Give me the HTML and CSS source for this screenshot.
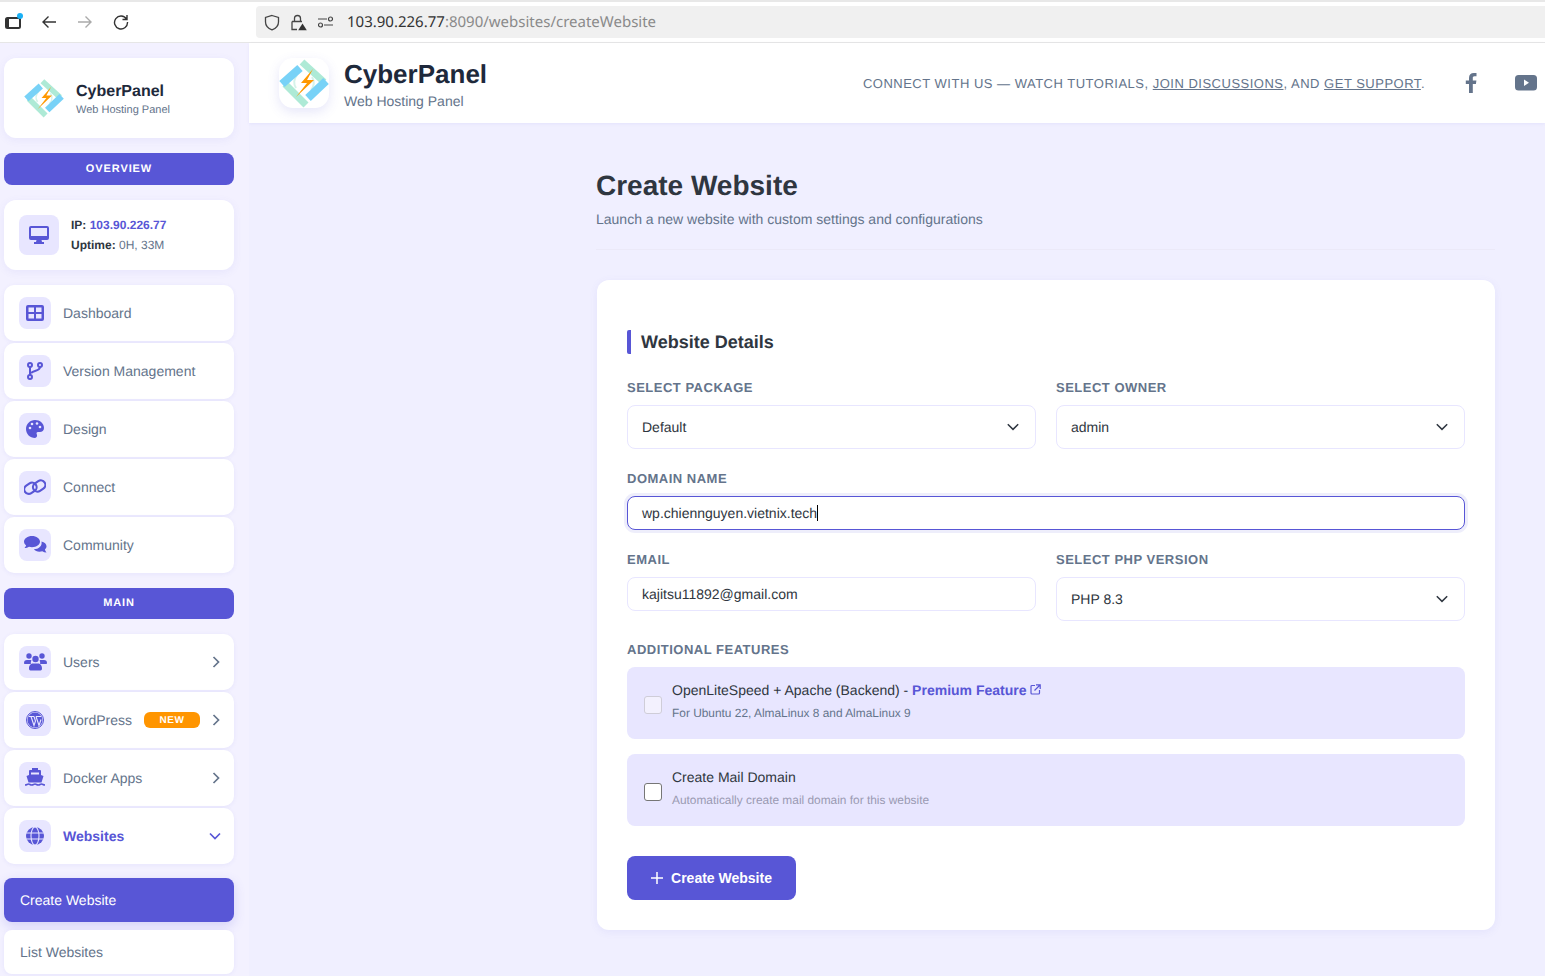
FILE: index.html
```html
<!DOCTYPE html>
<html lang="en">
<head>
    <meta charset="UTF-8">
    <title>Create Website - CyberPanel</title>
    <link rel="stylesheet" href="styles.css">
</head>
<body>
    <svg class="defs" width="0" height="0">
        <symbol id="logo" viewBox="0 0 50 50">
            <g fill="none" stroke="#aeead6" stroke-width="7">
                <path d="M23 4 45 24"/>
                <path d="M6 26 27 47"/>
            </g>
            <path d="M17 30a10.500 10.500 0 0 1 1 -13M33 19a10.500 10.500 0 0 1 -1 13" fill="none" stroke="#d5f3ea" stroke-width="2"/>
            <g fill="none" stroke="#78d2f7" stroke-width="8">
                <path d="M3 26 21 10"/>
                <path d="M47 23 29 40"/>
            </g>
            <path d="M34 11 22 25h6L17 39 35 22h-7Z" fill="#ff9800"/>
        </symbol>
    </svg>

    <header class="browser-bar">
        <div class="browser-nav">
            <span class="tab-icon"><svg width="16" height="13" viewBox="0 0 16 13"><rect x="1" y="2" width="14" height="10" rx="1.500" fill="none" stroke="#333" stroke-width="2"/><path d="M1 3h3v8H1z" fill="#333"/></svg><i class="tab-dot"></i></span>
            <svg class="nav-icon" width="16" height="16" viewBox="0 0 16 16"><path d="M15 8H2M7.500 2.500 2 8l5.500 5.500" fill="none" stroke="#333" stroke-width="1.400"/></svg>
            <svg class="nav-icon" width="16" height="16" viewBox="0 0 16 16"><path d="M1 8h13M8.500 2.500 14 8l-5.500 5.500" fill="none" stroke="#aaa" stroke-width="1.400"/></svg>
            <svg class="nav-icon" width="16" height="16" viewBox="0 0 16 16"><path d="M13.500 5A6.500 6.500 0 1 0 14.500 8M14 1v4.500H9.500" fill="none" stroke="#333" stroke-width="1.400"/></svg>
        </div>
        <div class="url-bar">
            <svg width="16" height="17" viewBox="0 0 16 17"><path d="M8 1.500 14.500 3.500V8c0 4-3 6.500-6.500 7.800C4.500 14.500 1.500 12 1.500 8V3.500Z" fill="none" stroke="#444" stroke-width="1.300"/></svg>
            <svg width="16" height="17" viewBox="0 0 16 17"><path d="M3.500 7V4.500a3 3 0 0 1 6 0V7M1 7.500h10M1 7.500v8h5" fill="none" stroke="#444" stroke-width="1.300"/><path d="M11.500 9.500l4.300 6.800H7.200Z" fill="#333"/></svg>
            <svg width="16" height="12" viewBox="0 0 16 12"><path d="M0 3h9M6 9h9" stroke="#444" stroke-width="1.200"/><circle cx="12.500" cy="3" r="2" fill="none" stroke="#444" stroke-width="1.200"/><circle cx="2.500" cy="9" r="2" fill="none" stroke="#444" stroke-width="1.200"/></svg>
            <span class="url-text">103.90.226.77<span class="url-dim">:8090/websites/createWebsite</span></span>
        </div>
    </header>

    <div class="layout">
        <aside class="sidebar">
            <div class="card brand-card">
                <svg width="40" height="40"><use href="#logo"/></svg>
                <div class="brand-text">
                    <div class="brand-name">CyberPanel</div>
                    <div class="brand-sub">Web Hosting Panel</div>
                </div>
            </div>

            <div class="section-pill">OVERVIEW</div>

            <div class="card info-card">
                <span class="info-icon">
                    <svg width="20" height="18" viewBox="0 0 20 18"><path d="M2 0h16a2 2 0 0 1 2 2v10a2 2 0 0 1-2 2h-5.500l.5 2h2v2H5v-2h2l.5-2H2a2 2 0 0 1-2-2V2a2 2 0 0 1 2-2Zm0 2v8h16V2Z" fill="#5856d6" fill-rule="evenodd"/></svg>
                </span>
                <div class="info-text">
                    <div><b>IP:</b> <b class="accent">103.90.226.77</b></div>
                    <div><b>Uptime:</b> <span class="muted">0H, 33M</span></div>
                </div>
            </div>

            <nav class="nav-group">
                <a class="nav-item"><span class="nav-icon-box"><svg width="18" height="16" viewBox="0 0 18 16"><path d="M2 0h14a2 2 0 0 1 2 2v12a2 2 0 0 1-2 2H2a2 2 0 0 1-2-2V2a2 2 0 0 1 2-2Zm.5 2.500V7H8V2.500Zm7.500 0V7h5.500V2.500ZM2.500 9v4.500H8V9ZM10 9v4.500h5.500V9Z" fill="#5856d6" fill-rule="evenodd"/></svg></span>Dashboard</a>
                <a class="nav-item"><span class="nav-icon-box"><svg width="16" height="18" viewBox="0 0 16 18"><g fill="none" stroke="#5856d6" stroke-width="2"><circle cx="3" cy="3" r="2"/><circle cx="13" cy="3" r="2"/><circle cx="3" cy="15" r="2"/><path d="M3 5v8M13 5c0 4-6 3-9 6"/></g></svg></span>Version Management</a>
                <a class="nav-item"><span class="nav-icon-box"><svg width="18" height="18" viewBox="0 0 18 18"><path d="M9 0c5 0 9 3.500 9 8 0 2.500-2 4-4 4h-2c-1.500 0-1.800 1.200-1.200 2.300.8 1.700-.2 3.700-1.800 3.700-5 0-9-4-9-9s4-9 9-9Z" fill="#5856d6"/><g fill="#e8e6ff"><circle cx="4" cy="8" r="1.300"/><circle cx="6" cy="4" r="1.300"/><circle cx="11" cy="3.500" r="1.300"/><circle cx="14" cy="7" r="1.300"/></g></svg></span>Design</a>
                <a class="nav-item"><span class="nav-icon-box"><svg width="22" height="18" viewBox="0 0 22 18"><g fill="none" stroke="#5856d6" stroke-width="2.100" transform="rotate(-34 11 9)"><rect x="0" y="3" width="13" height="9" rx="4.500"/><rect x="8.500" y="6" width="13" height="9" rx="4.500"/></g></svg></span>Connect</a>
                <a class="nav-item"><span class="nav-icon-box"><svg width="23" height="18" viewBox="0 0 23 18"><path d="M8 0c4.400 0 8 2.500 8 5.600s-3.600 5.600-8 5.600c-1 0-2-.1-3-.4-1.200.8-2.700 1.200-4.500 1.200.8-.8 1.300-1.600 1.600-2.500C.8 8.500 0 7.100 0 5.600 0 2.500 3.600 0 8 0Z" fill="#5856d6"/><path d="M17.500 5.500c3 .5 5 2.500 5 4.800 0 1.300-.6 2.400-1.600 3.300.2.900.8 2 1.600 2.900-1.600 0-3-.4-4.200-1.200-.9.300-1.700.4-2.800.4-2.400 0-4.500-1-5.600-2.500 4.700 0 8.500-3 7.600-7.700Z" fill="#5856d6"/></svg></span>Community</a>
            </nav>

            <div class="section-pill">MAIN</div>

            <nav class="nav-group">
                <a class="nav-item"><span class="nav-icon-box"><svg width="23" height="18" viewBox="0 0 23 18"><g fill="#5856d6"><circle cx="5" cy="3" r="2.700"/><circle cx="18" cy="3" r="2.700"/><circle cx="11.500" cy="6" r="3.200"/><path d="M0 10c0-2 1-3 3-3h3c.6 0 1 .1 1.500.4-.7 1-.8 1.700-.6 3.600H1c-.6 0-1-.4-1-1ZM23 10c0-2-1-3-3-3h-3c-.6 0-1 .1-1.500.4.700 1 .8 1.700.6 3.600H22c.6 0 1-.4 1-1ZM5 15.500C5 12 7 10.500 9 10.500h5c2 0 4 1.500 4 5 0 1-.6 2-1.500 2h-10C5.600 17.500 5 16.500 5 15.500Z"/></g></svg></span>Users<svg class="chev" width="8" height="12" viewBox="0 0 8 12"><path d="M1.500 1 6.500 6l-5 5" fill="none" stroke="#64748b" stroke-width="1.700"/></svg></a>
                <a class="nav-item"><span class="nav-icon-box"><svg width="18" height="18" viewBox="0 0 18 18"><circle cx="9" cy="9" r="8.500" fill="none" stroke="#5856d6"/><circle cx="9" cy="9" r="7.500" fill="#5856d6"/><path d="M3 5.500h5M10 5.500h5M5 5.500l3 9 1.500-4.500L8 5.500M10 5.500l3 9 2-6" fill="none" stroke="#e8e6ff" stroke-width="1.100"/></svg></span>WordPress<span class="badge">NEW</span><svg class="chev" width="8" height="12" viewBox="0 0 8 12"><path d="M1.500 1 6.500 6l-5 5" fill="none" stroke="#64748b" stroke-width="1.700"/></svg></a>
                <a class="nav-item"><span class="nav-icon-box"><svg width="20" height="20" viewBox="0 0 20 20"><path d="M7 0h6v2h2a1 1 0 0 1 1 1v4l2.500 1-2 6.500H3.500L1.500 8 4 7V3a1 1 0 0 1 1-1h2Z" fill="#5856d6"/><path d="M6 4.500h8v2H6z" fill="#e8e6ff"/><path d="M0 17c2 0 2-1 3.500-1s1.500 1 3.250 1 1.750-1 3.250-1 1.500 1 3.250 1 1.750-1 3.250-1 1.500 1 3.500 1" fill="none" stroke="#5856d6" stroke-width="1.600"/></svg></span>Docker Apps<svg class="chev" width="8" height="12" viewBox="0 0 8 12"><path d="M1.500 1 6.500 6l-5 5" fill="none" stroke="#64748b" stroke-width="1.700"/></svg></a>
                <a class="nav-item nav-open"><span class="nav-icon-box"><svg width="18" height="18" viewBox="0 0 18 18"><circle cx="9" cy="9" r="9" fill="#5856d6"/><g fill="none" stroke="#e8e6ff" stroke-width="1.100"><ellipse cx="9" cy="9" rx="4" ry="9"/><path d="M0 6h18M0 12h18"/></g></svg></span>Websites<svg class="chev" width="12" height="8" viewBox="0 0 12 8"><path d="M1 1.500 6 6.500l5-5" fill="none" stroke="#5856d6" stroke-width="1.700"/></svg></a>
            </nav>

            <div class="sub-group">
                <a class="sub-item sub-active">Create Website</a>
                <a class="sub-item">List Websites</a>
            </div>
        </aside>

        <div class="content">
            <div class="topbar">
                <div class="top-brand">
                    <span class="top-logo"><svg width="50" height="50"><use href="#logo"/></svg></span>
                    <div class="top-text">
                        <div class="top-name">CyberPanel</div>
                        <div class="top-sub">Web Hosting Panel</div>
                    </div>
                </div>
                <div class="top-links">
                    <span class="connect-text">CONNECT WITH US — WATCH TUTORIALS, <u>JOIN DISCUSSIONS</u>, AND <u>GET SUPPORT</u>.</span>
                    <svg class="fb-icon" width="12" height="20" viewBox="0 0 12 20"><path d="M4 20V11H.8V7.500H4V5c0-3.200 1.900-5 4.800-5 1.300 0 2.400.1 2.700.1v3.200H9.600C8.100 3.300 7.800 4 7.800 5.100v2.400h3.600l-.5 3.500H7.800v9Z" fill="#64748b"/></svg>
                    <svg class="yt-icon" width="22" height="16" viewBox="0 0 22 16"><rect width="22" height="15.500" rx="3.500" fill="#64748b"/><path d="M9 4.500v6.500l5-3.250Z" fill="#fff"/></svg>
                </div>
            </div>

            <main class="page">
                <h1>Create Website</h1>
                <p class="page-sub">Launch a new website with custom settings and configurations</p>
                <div class="divider"></div>

                <section class="form-card">
                    <h2>Website Details</h2>

                    <div class="form-row">
                        <div class="field">
                            <label>SELECT PACKAGE</label>
                            <div class="control select">Default<svg width="12" height="8" viewBox="0 0 12 8"><path d="M.8 1.200 6 6.400l5.200-5.200" fill="none" stroke="#2f3640" stroke-width="1.500"/></svg></div>
                        </div>
                        <div class="field">
                            <label>SELECT OWNER</label>
                            <div class="control select">admin<svg width="12" height="8" viewBox="0 0 12 8"><path d="M.8 1.200 6 6.400l5.200-5.200" fill="none" stroke="#2f3640" stroke-width="1.500"/></svg></div>
                        </div>
                    </div>

                    <div class="field">
                        <label>DOMAIN NAME</label>
                        <div class="control input focused">wp.chiennguyen.vietnix.tech<span class="caret"></span></div>
                    </div>

                    <div class="form-row">
                        <div class="field">
                            <label>EMAIL</label>
                            <div class="control input">kajitsu11892@gmail.com</div>
                        </div>
                        <div class="field">
                            <label>SELECT PHP VERSION</label>
                            <div class="control select">PHP 8.3<svg width="12" height="8" viewBox="0 0 12 8"><path d="M.8 1.200 6 6.400l5.200-5.200" fill="none" stroke="#2f3640" stroke-width="1.500"/></svg></div>
                        </div>
                    </div>

                    <div class="field features-field">
                        <label>ADDITIONAL FEATURES</label>
                        <div class="feature">
                            <span class="check check-off"></span>
                            <div class="feature-text">
                                <div class="feature-title">OpenLiteSpeed + Apache (Backend) - <b class="accent">Premium Feature</b>
                                    <svg width="11" height="11" viewBox="0 0 11 11"><path d="M5 1.500H2A1 1 0 0 0 1 2.500V9a1 1 0 0 0 1 1h6.500a1 1 0 0 0 1-1V6M6 .8h4.200V5M10 1 4.500 6.500" fill="none" stroke="#5856d6" stroke-width="1.200"/></svg>
                                </div>
                                <div class="feature-note">For Ubuntu 22, AlmaLinux 8 and AlmaLinux 9</div>
                            </div>
                        </div>
                        <div class="feature">
                            <span class="check"></span>
                            <div class="feature-text">
                                <div class="feature-title">Create Mail Domain</div>
                                <div class="feature-note note-light">Automatically create mail domain for this website</div>
                            </div>
                        </div>
                    </div>

                    <button class="submit"><svg width="12" height="12" viewBox="0 0 12 12"><path d="M6 0v12M0 6h12" stroke="#fff" stroke-width="1.500"/></svg>Create Website</button>
                </section>
            </main>
        </div>
    </div>
</body>
</html>
```

FILE: styles.css
```css
* {
    box-sizing: border-box;
}
html, body {
    height: 976px;
    overflow: hidden;
}
body {
    margin: 0;
    font-family: "Liberation Sans", Arial, sans-serif;
    text-rendering: geometricPrecision;
    background-color: #f3f1ff;
    color: #2f3640;
}
.defs {
    display: block;
    height: 0;
}

/* browser chrome */
.browser-bar {
    height: 43px;
    background-color: #fff;
    border-top: 2px solid #e8e8e8;
    border-bottom: 1px solid #e6e6e6;
    display: flex;
    align-items: center;
}
.browser-nav {
    width: 256px;
    display: flex;
    align-items: center;
    padding-left: 5px;
}
.tab-icon {
    position: relative;
    width: 18px;
    height: 13px;
    margin-right: 18px;
    display: block;
}
.tab-icon svg {
    display: block;
}
.tab-dot {
    position: absolute;
    top: -3px;
    right: 0;
    width: 6px;
    height: 6px;
    border-radius: 50%;
    background-color: #1ab0f5;
}
.nav-icon {
    margin-right: 20px;
}
.url-bar {
    flex: 1;
    height: 32px;
    background-color: #f0f0f0;
    border-radius: 4px 0 0 4px;
    display: flex;
    align-items: center;
    gap: 11px;
    padding-left: 8px;
}
.url-text {
    font-family: "Noto Sans", sans-serif;
    font-size: 15px;
    color: #333;
    margin-left: 2px;
}
.url-dim {
    color: #8a8a8a;
}

.layout {
    display: flex;
    height: 933px;
}

/* sidebar */
.sidebar {
    width: 249px;
    flex-shrink: 0;
    padding: 15px 15px 0 4px;
}
.card {
    background-color: #fff;
    border-radius: 12px;
    box-shadow: 0 2px 8px rgba(88, 86, 214, 0.08);
}
.brand-card {
    height: 80px;
    display: flex;
    align-items: center;
    gap: 12px;
    padding-left: 20px;
}
.brand-text {
    padding-top: 4px;
}
.brand-name {
    font-size: 16px;
    font-weight: bold;
    color: #1e293b;
    line-height: 20px;
}
.brand-sub {
    font-size: 11px;
    color: #64748b;
    line-height: 16px;
}
.section-pill {
    height: 31.500px;
    margin: 15px 0;
    background-color: #5856d6;
    border-radius: 8px;
    color: #fff;
    font-size: 11px;
    font-weight: bold;
    letter-spacing: 0.900px;
    display: flex;
    align-items: center;
    justify-content: center;
}
.info-card {
    height: 70px;
    display: flex;
    align-items: center;
    gap: 12px;
    padding-left: 15px;
}
.info-icon {
    width: 40px;
    height: 40px;
    border-radius: 8px;
    background-color: #e8e6ff;
    display: flex;
    align-items: center;
    justify-content: center;
}
.info-text {
    font-size: 12px;
    line-height: 20px;
}
.accent {
    color: #5856d6;
}
.muted {
    color: #64748b;
}
.nav-group {
    display: flex;
    flex-direction: column;
    gap: 2px;
    margin-top: 15px;
}
.nav-item {
    height: 56px;
    background-color: #fff;
    border-radius: 10px;
    box-shadow: 0 1px 4px rgba(88, 86, 214, 0.08);
    display: flex;
    align-items: center;
    padding: 0 14px 0 15px;
    font-size: 14px;
    color: #64748b;
}
.nav-icon-box {
    width: 32px;
    height: 32px;
    margin-right: 12px;
    border-radius: 8px;
    background-color: #e8e6ff;
    display: flex;
    align-items: center;
    justify-content: center;
}
.nav-open {
    color: #5856d6;
    font-weight: bold;
}
.nav-open .chev {
    margin-right: -1px;
}
.chev {
    margin-left: auto;
}
.badge {
    width: 56px;
    height: 16px;
    margin-left: 12px;
    border-radius: 6px;
    background-color: #ff9500;
    color: #fff;
    font-size: 10px;
    font-weight: bold;
    letter-spacing: 0.500px;
    display: flex;
    align-items: center;
    justify-content: center;
}
.sub-group {
    display: flex;
    flex-direction: column;
    gap: 8px;
    margin-top: 14px;
}
.sub-item {
    height: 44px;
    padding-left: 16px;
    background-color: #fff;
    border-radius: 8px;
    box-shadow: 0 1px 4px rgba(88, 86, 214, 0.08);
    display: flex;
    align-items: center;
    font-size: 14px;
    color: #64748b;
}
.sub-active {
    background-color: #5856d6;
    color: #fff;
    box-shadow: 0 4px 12px rgba(88, 86, 214, 0.2);
}

/* top bar */
.content {
    flex: 1;
    background-color: #f0efff;
}
.topbar {
    height: 80px;
    background-color: #fff;
    box-shadow: 0 1px 3px rgba(88, 86, 214, 0.08);
    display: flex;
    align-items: center;
    justify-content: space-between;
    padding-left: 30px;
}
.top-brand {
    display: flex;
    align-items: center;
    gap: 15px;
}
.top-logo {
    width: 50px;
    height: 50px;
    border-radius: 14px;
    background-color: #fff;
    box-shadow: 0 4px 12px rgba(88, 86, 214, 0.15);
    display: block;
}
.top-logo svg {
    display: block;
}
.top-text {
    padding-top: 4px;
}
.top-name {
    font-size: 26px;
    font-weight: bold;
    color: #1e293b;
    line-height: 30px;
}
.top-sub {
    font-size: 14px;
    color: #64748b;
    line-height: 20px;
    margin-top: 2px;
}
.top-links {
    display: flex;
    align-items: center;
    padding-right: 8px;
}
.connect-text {
    font-size: 13px;
    letter-spacing: 0.500px;
    color: #64748b;
}
.fb-icon {
    margin-left: 40px;
}
.yt-icon {
    margin-left: 38px;
}

/* page */
.page {
    padding: 46px 50px 0 347px;
}
h1 {
    margin: 0;
    font-size: 28px;
    line-height: 34px;
    color: #2f3640;
}
.page-sub {
    margin: 6px 0 0;
    font-size: 14px;
    line-height: 20px;
    color: #64748b;
}
.divider {
    height: 1px;
    margin: 20px 0 30px;
    background-color: #ebe9f8;
}
.form-card {
    margin-left: 1px;
    height: 650px;
    padding: 50px 30px 0;
    background-color: #fff;
    border-radius: 12px;
    box-shadow: 0 2px 8px rgba(88, 86, 214, 0.08);
}
h2 {
    margin: 0 0 26px;
    height: 24px;
    padding-left: 10px;
    border-left: 4px solid #5856d6;
    border-radius: 2px;
    font-size: 18px;
    line-height: 24px;
    color: #2f3640;
}
.form-row {
    display: grid;
    grid-template-columns: 1fr 1fr;
    gap: 20px;
    align-items: start;
}
.field {
    margin-bottom: 22px;
}
.features-field {
    margin-top: -1px;
}
label {
    display: block;
    margin-bottom: 10px;
    font-size: 13px;
    line-height: 15px;
    font-weight: bold;
    letter-spacing: 0.500px;
    color: #64748b;
}
.control {
    display: flex;
    align-items: center;
    padding: 0 16px 0 14px;
    background-color: #fff;
    border: 1px solid #e8e6ff;
    border-radius: 8px;
    font-size: 14px;
    color: #2f3640;
}
.select {
    height: 44px;
    justify-content: space-between;
}
.input {
    height: 34px;
}
.focused {
    border-color: #5856d6;
    box-shadow: 0 0 0 3px rgba(88, 86, 214, 0.1);
}
.caret {
    width: 1px;
    height: 16px;
    background-color: #000;
}
.feature {
    height: 72px;
    margin-bottom: 15px;
    padding-left: 17px;
    background-color: #e8e6ff;
    border-radius: 8px;
    display: flex;
    align-items: center;
    gap: 10px;
}
.feature-text {
    margin-bottom: 4px;
}
.check {
    width: 18px;
    height: 18px;
    flex-shrink: 0;
    background-color: #fff;
    border: 1px solid #767676;
    border-radius: 3px;
    margin-top: 3px;
}
.check-off {
    background-color: #f3f1fe;
    border-color: #cfcdd8;
}
.feature-title {
    font-size: 14px;
    line-height: 18px;
    color: #2f3640;
}
.feature-note {
    margin-top: 7px;
    font-size: 11.900px;
    line-height: 15px;
    color: #64748b;
}
.note-light {
    color: #9a9ab2;
}
.submit {
    width: 169px;
    height: 44px;
    margin-top: 30px;
    background-color: #5856d6;
    color: #fff;
    border: none;
    border-radius: 8px;
    font-family: inherit;
    font-size: 14px;
    font-weight: bold;
    display: flex;
    align-items: center;
    justify-content: center;
    gap: 8px;
}
```
